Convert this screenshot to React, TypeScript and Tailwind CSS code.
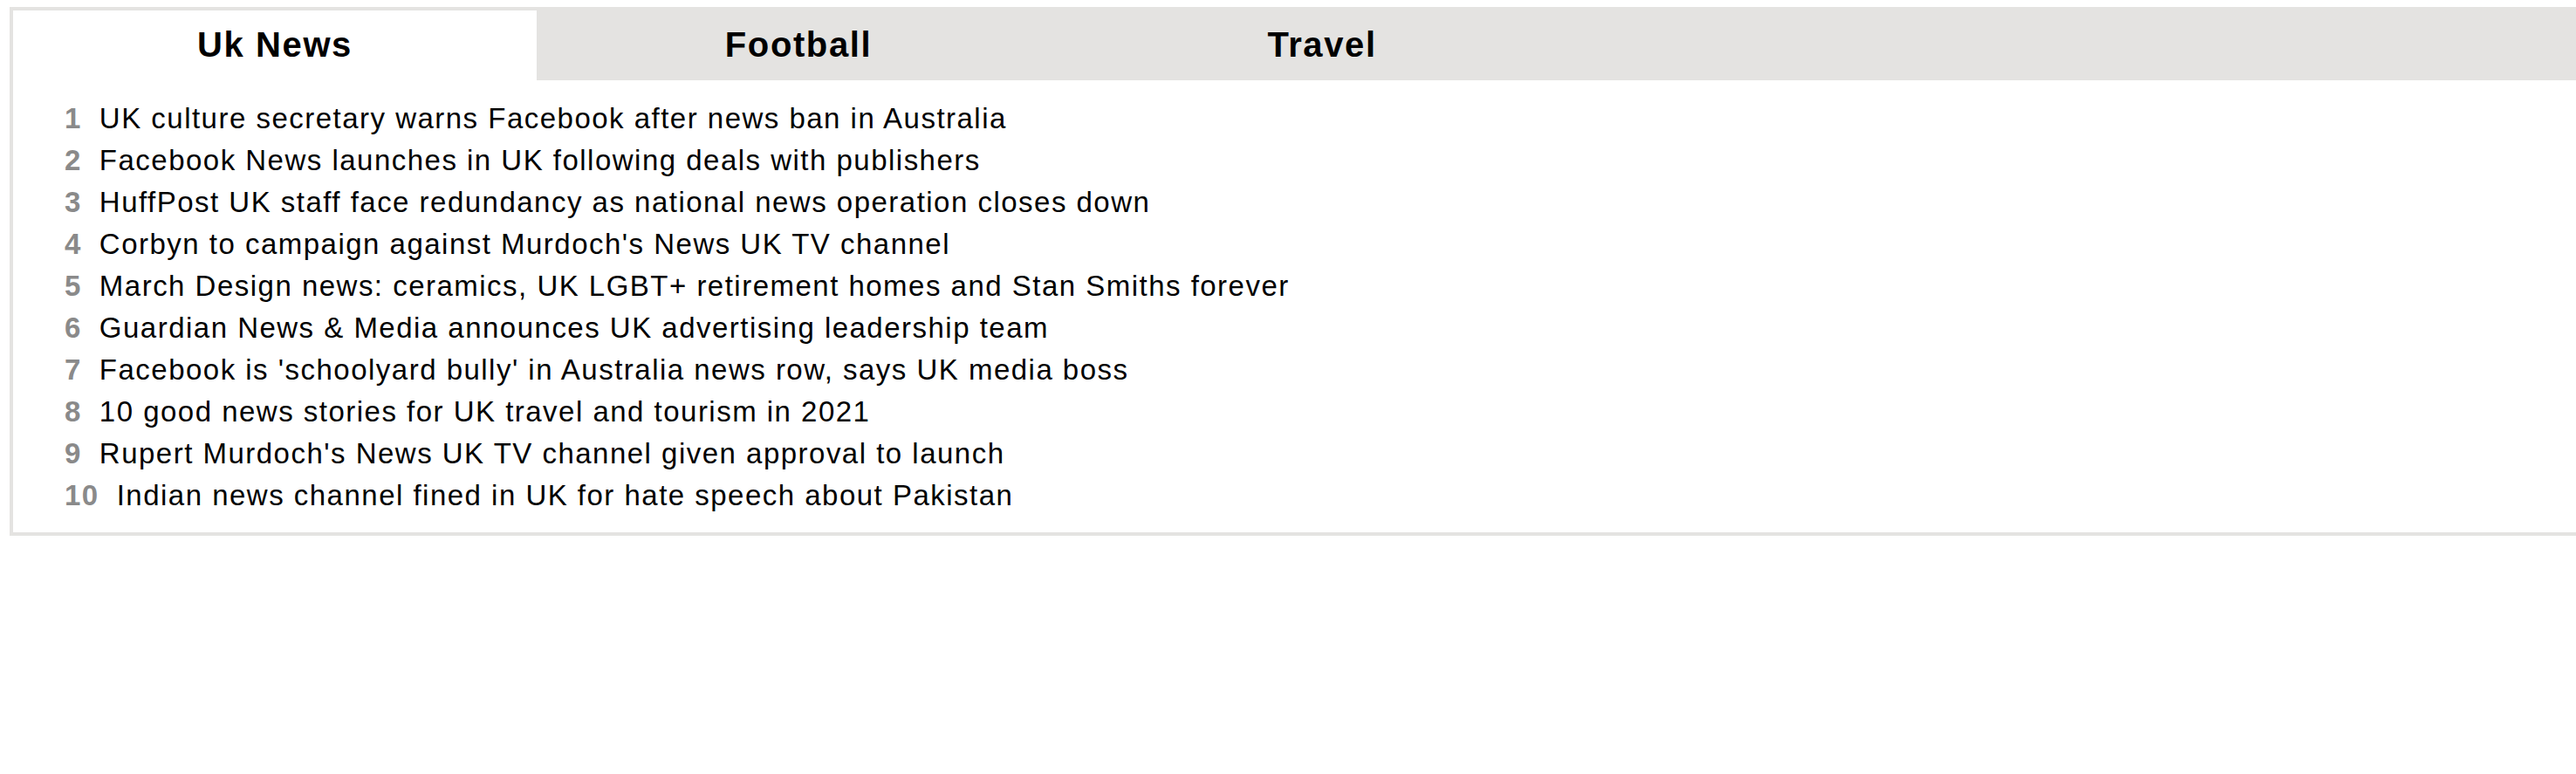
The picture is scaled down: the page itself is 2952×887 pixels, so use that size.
import { useState } from "react";

const tabs = ["Uk News", "Football", "Travel"];

const stories: Record<string, string[]> = {
  "Uk News": [
    "UK culture secretary warns Facebook after news ban in Australia",
    "Facebook News launches in UK following deals with publishers",
    "HuffPost UK staff face redundancy as national news operation closes down",
    "Corbyn to campaign against Murdoch's News UK TV channel",
    "March Design news: ceramics, UK LGBT+ retirement homes and Stan Smiths forever",
    "Guardian News & Media announces UK advertising leadership team",
    "Facebook is 'schoolyard bully' in Australia news row, says UK media boss",
    "10 good news stories for UK travel and tourism in 2021",
    "Rupert Murdoch's News UK TV channel given approval to launch",
    "Indian news channel fined in UK for hate speech about Pakistan",
  ],
  Football: [],
  Travel: [],
};

export default function App() {
  const [active, setActive] = useState("Uk News");
  const items = stories[active] ?? [];

  return (
    <div className="min-h-[887px] bg-white pt-[8px] pl-[11px] font-['Liberation_Sans',Arial,sans-serif] text-black">
      <div className="border-[#e4e3e1] border-t-4 border-l-4 border-b-4">
        {/* tab strip */}
        <div className="flex h-[80px] bg-[#e4e3e1]">
          {tabs.map((tab) => (
            <button
              key={tab}
              onClick={() => setActive(tab)}
              className={`w-[600px] pb-[2px] text-[40px] font-bold tracking-[0.04em] ${
                active === tab ? "bg-white" : "bg-[#e4e3e1]"
              }`}
            >
              {tab}
            </button>
          ))}
        </div>

        <ol className="pt-[20px] pb-[18px] pl-[59px]">
          {items.map((title, i) => (
            <li key={title} className="flex h-[48px] items-center text-[33px] tracking-[0.045em]">
              <span className="mr-[20px] font-bold text-[#8a8a8a]">{i + 1}</span>
              <span>{title}</span>
            </li>
          ))}
        </ol>
      </div>
    </div>
  );
}
